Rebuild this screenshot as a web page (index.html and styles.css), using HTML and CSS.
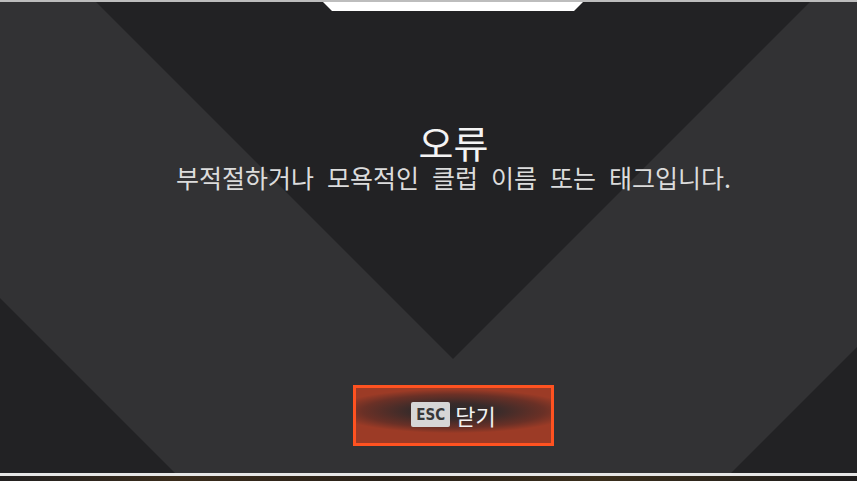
FILE: index.html
```html
<!DOCTYPE html>
<html lang="ko">
<head>
<meta charset="utf-8">
<title>오류</title>
<link rel="stylesheet" href="styles.css">
</head>
<body>
<div class="screen">
  <div class="topline"></div>
  <div class="panel">
    <svg class="deco" viewBox="0 0 857 471" width="857" height="471" aria-hidden="true">
      <polygon points="96,0 810,0 453,357" fill="#222224"/>
      <polygon points="0,296 175,471 0,471" fill="#222224"/>
      <polygon points="857,345 731,471 857,471" fill="#222224"/>
      <polygon points="323,0 583,0 574,9 332,9" fill="#ffffff"/>
    </svg>
    <div class="content">
      <h1 class="title">오류</h1>
      <p class="message">부적절하거나 모욕적인 클럽 이름 또는 태그입니다.</p>
      <button class="close-btn" type="button"><span class="key">ESC</span><span class="label">닫기</span></button>
    </div>
  </div>
  <div class="bottomline"></div>
  <div class="strip"></div>
</div>
</body>
</html>
```
FILE: styles.css
```css
html, body {
  margin: 0;
  padding: 0;
  background: #1a1715;
}
.screen {
  width: 857px;
  height: 481px;
  display: flex;
  flex-direction: column;
  overflow: hidden;
  font-family: "Noto Sans CJK KR", "Noto Sans", sans-serif;
}
.topline {
  height: 2px;
  background: #bdbdbd;
  flex: none;
}
.panel {
  position: relative;
  height: 471px;
  flex: none;
  background: #323234;
  overflow: hidden;
}
.deco {
  position: absolute;
  left: 0;
  top: 0;
  display: block;
}
.content {
  position: relative;
  display: flex;
  flex-direction: column;
  align-items: center;
  padding-top: 120px;
  padding-left: 50px;
}
.title {
  margin: 0;
  font-size: 38px;
  line-height: 40px;
  font-weight: 400;
  color: #f4f4f4;
}
.message {
  margin: 0;
  font-size: 25px;
  line-height: 30px;
  color: #dcdcdc;
  word-spacing: 6px;
}
.close-btn {
  margin-top: 193px;
  width: 201px;
  height: 61px;
  box-sizing: border-box;
  border: 3px solid #ff5220;
  background: radial-gradient(ellipse 62% 40% at 50% 42%, #2c2929 0%, #382b2a 35%, #6a3026 75%, #9c3b26 100%);
  display: flex;
  align-items: center;
  justify-content: center;
  gap: 5px;
  padding: 0 0 2px 0;
  font-family: "Noto Sans CJK KR", "Noto Sans", sans-serif;
  cursor: pointer;
}
.key {
  display: inline-flex;
  align-items: center;
  justify-content: center;
  width: 39px;
  height: 25px;
  background: #d6d6d6;
  color: #383838;
  border-radius: 2px;
  font-family: "DejaVu Sans Condensed", "DejaVu Sans", sans-serif;
  font-stretch: condensed;
  font-weight: 700;
  font-size: 15px;
}
.label {
  color: #f2f2f2;
  font-size: 22px;
  line-height: 28px;
}
.bottomline {
  height: 3px;
  flex: none;
  background: #e6e6e6;
}
.strip {
  flex: 1;
  background: linear-gradient(90deg, #222020 0%, #3a2c1c 20%, #2a2118 45%, #3a2e1c 70%, #1e1c1c 100%);
}
```
